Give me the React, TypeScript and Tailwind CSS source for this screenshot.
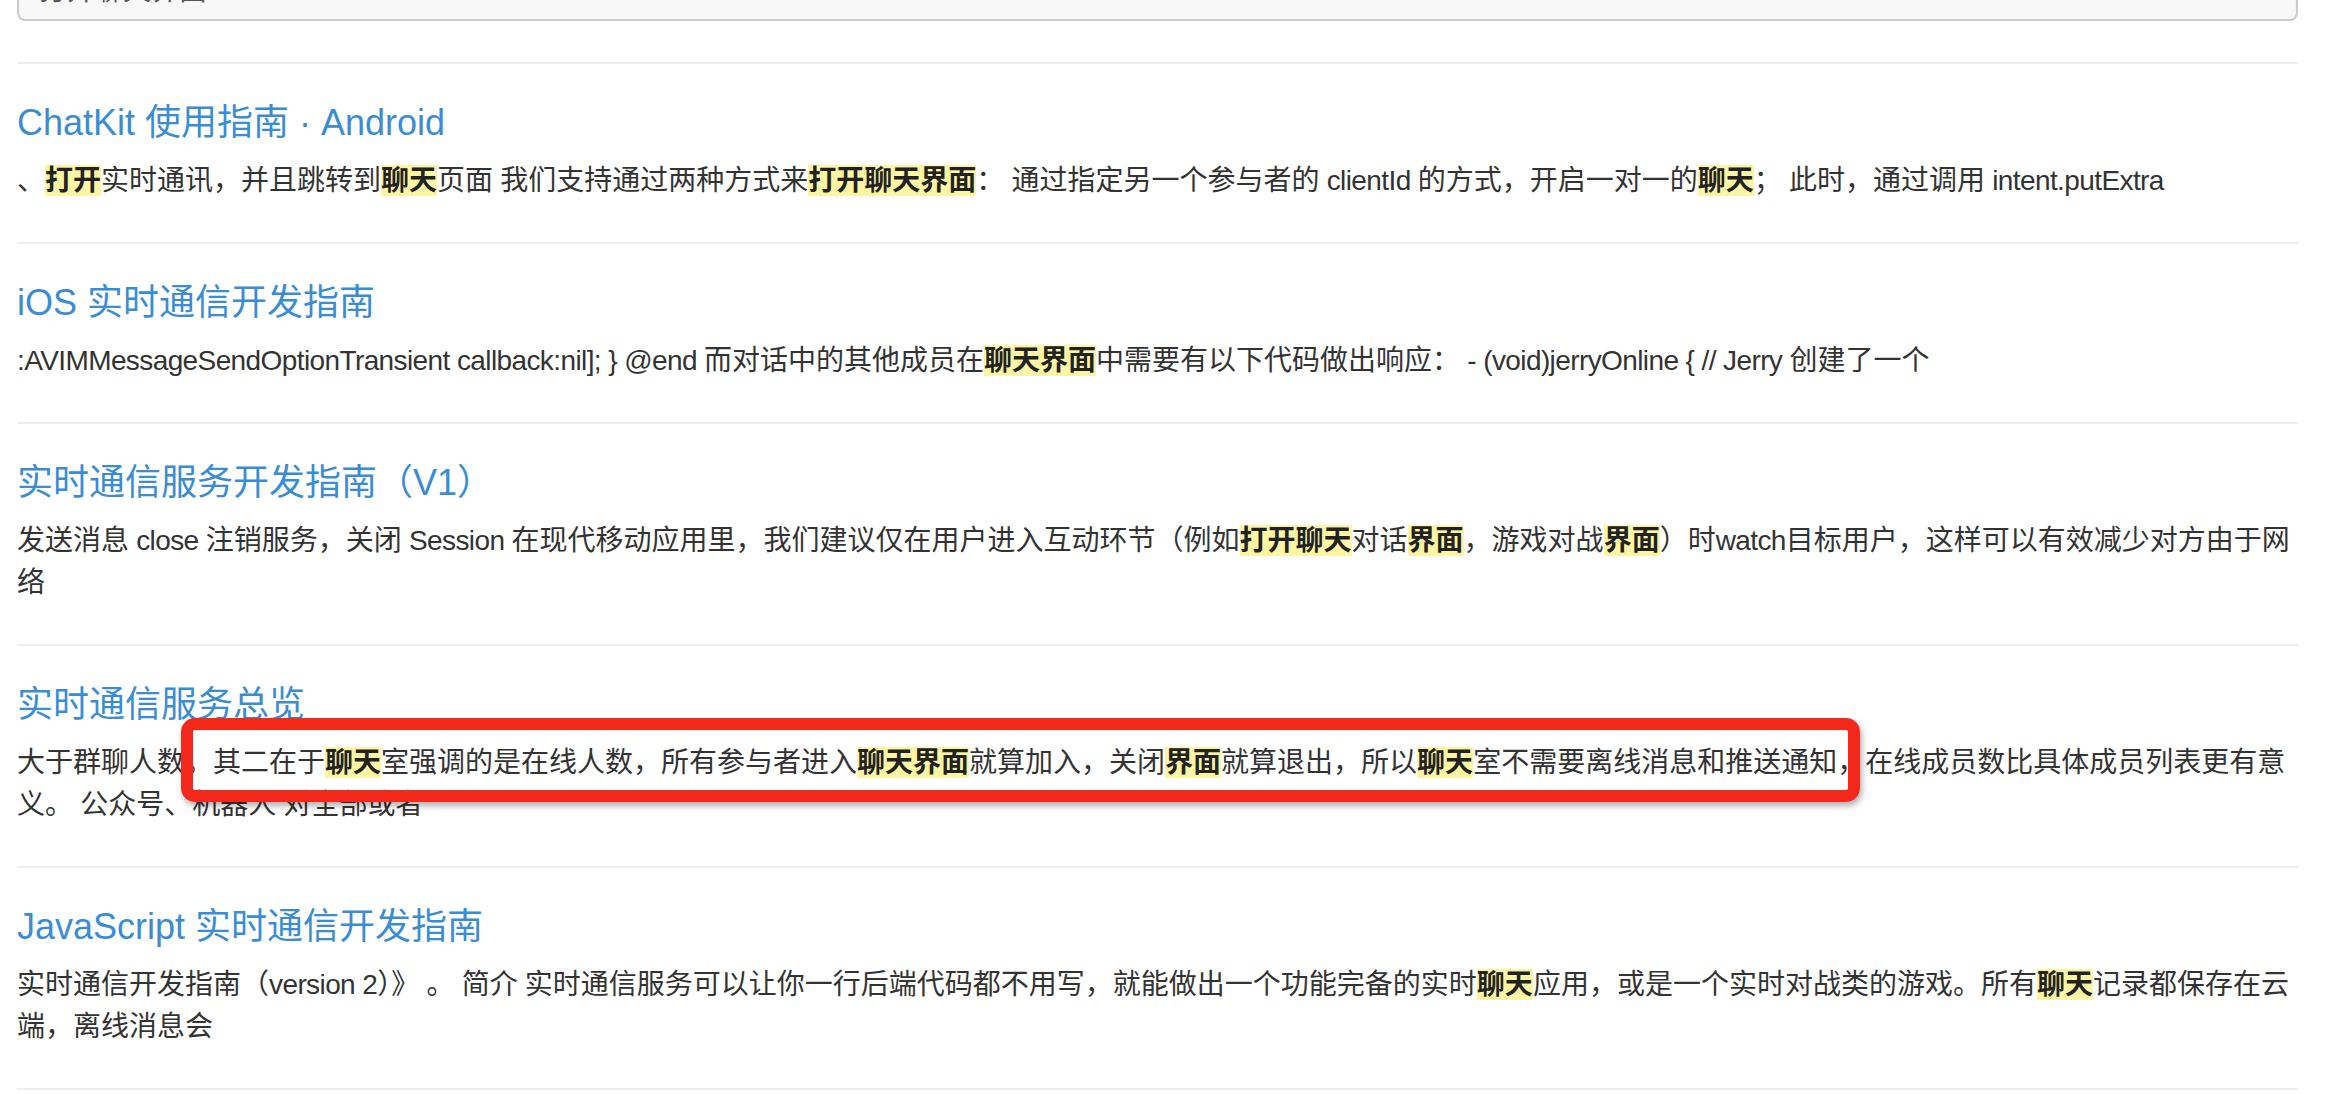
type Result = { title: string; body: string };

const RESULTS: Result[] = [
  {
    title: "ChatKit 使用指南 · Android",
    body: "、[[打开]]实时通讯，并且跳转到[[聊天]]页面 我们支持通过两种方式来[[打开聊天界面]]： 通过指定另一个参与者的 clientId 的方式，开启一对一的[[聊天]]； 此时，通过调用 intent.putExtra",
  },
  {
    title: "iOS 实时通信开发指南",
    body: ":AVIMMessageSendOptionTransient callback:nil]; } @end 而对话中的其他成员在[[聊天界面]]中需要有以下代码做出响应： - (void)jerryOnline { // Jerry 创建了一个",
  },
  {
    title: "实时通信服务开发指南（V1）",
    body: "发送消息 close 注销服务，关闭 Session 在现代移动应用里，我们建议仅在用户进入互动环节（例如[[打开聊天]]对话[[界面]]，游戏对战[[界面]]）时watch目标用户，这样可以有效减少对方由于网络",
  },
  {
    title: "实时通信服务总览",
    body: "大于群聊人数。其二在于[[聊天]]室强调的是在线人数，所有参与者进入[[聊天界面]]就算加入，关闭[[界面]]就算退出，所以[[聊天]]室不需要离线消息和推送通知，在线成员数比具体成员列表更有意义。 公众号、机器人 对全部或者",
  },
  {
    title: "JavaScript 实时通信开发指南",
    body: "实时通信开发指南（version 2）》 。 简介 实时通信服务可以让你一行后端代码都不用写，就能做出一个功能完备的实时[[聊天]]应用，或是一个实时对战类的游戏。所有[[聊天]]记录都保存在云端，离线消息会",
  },
];

const CJK_RUNS = /[\u3000-\u303f\u4e00-\u9fff\uff00-\uffef]+|[^\u3000-\u303f\u4e00-\u9fff\uff00-\uffef]+/g;

// latin runs set a touch tighter, like the narrower mac latin glyphs
function Runs({ text }: { text: string }) {
  const runs = text.match(CJK_RUNS) ?? [];
  return (
    <>
      {runs.map((r, i) =>
        /[\u3000-\u303f\u4e00-\u9fff\uff00-\uffef]/.test(r) ? (
          <span key={i}>{r}</span>
        ) : (
          <span key={i} className="tracking-[-0.6px]">{r}</span>
        )
      )}
    </>
  );
}

// split "[[...]]" markers into highlighted spans
function Highlighted({ text }: { text: string }) {
  const parts = text.split(/(\[\[[^\]]+\]\])/g);
  return (
    <>
      {parts.map((p, i) =>
        p.startsWith("[[") ? (
          <em key={i} className="not-italic font-semibold text-[#222] bg-[#fcf6a4]">
            {p.slice(2, -2)}
          </em>
        ) : (
          <Runs key={i} text={p} />
        )
      )}
    </>
  );
}

export default function App() {
  return (
    <div
      className="relative w-[2346px] h-[1094px] overflow-hidden bg-white text-[#333]"
      style={{ fontFamily: '"Liberation Sans", "Noto Sans CJK SC", sans-serif' }}
    >
      <div className="pl-[17px] pr-[48px]">
        {/* search box, scrolled mostly out of view */}
        <div className="h-[21px] overflow-hidden flex flex-col justify-end">
          <div className="shrink-0 h-[68px] rounded-[8px] border-2 border-[#ccc] bg-[#f8f8f8] shadow-[inset_0_1px_2px_rgba(0,0,0,0.06)] flex items-center pt-[8px] px-[20px] text-[28px] text-[#555]">
            打开聊天界面
          </div>
        </div>

        <ul className="mt-[41px] border-b-2 border-[#eee]">
          {RESULTS.map((r) => (
            <li key={r.title} className="border-t-2 border-[#eee] pt-[39px] pb-[40px]">
              <h3 className="text-[36px] leading-[40px] text-[#3b8dd3]">{r.title}</h3>
              <p className="mt-[17px] mr-[-6px] text-[28px] leading-[42px]">
                <Highlighted text={r.body} />
              </p>
            </li>
          ))}
        </ul>
      </div>

      {/* annotation */}
      <div className="absolute left-[181px] top-[718px] w-[1679px] h-[84px] rounded-[14px] border-[12px] border-[#f4291c] shadow-[2px_4px_6px_rgba(0,0,0,0.3)]" />
    </div>
  );
}
